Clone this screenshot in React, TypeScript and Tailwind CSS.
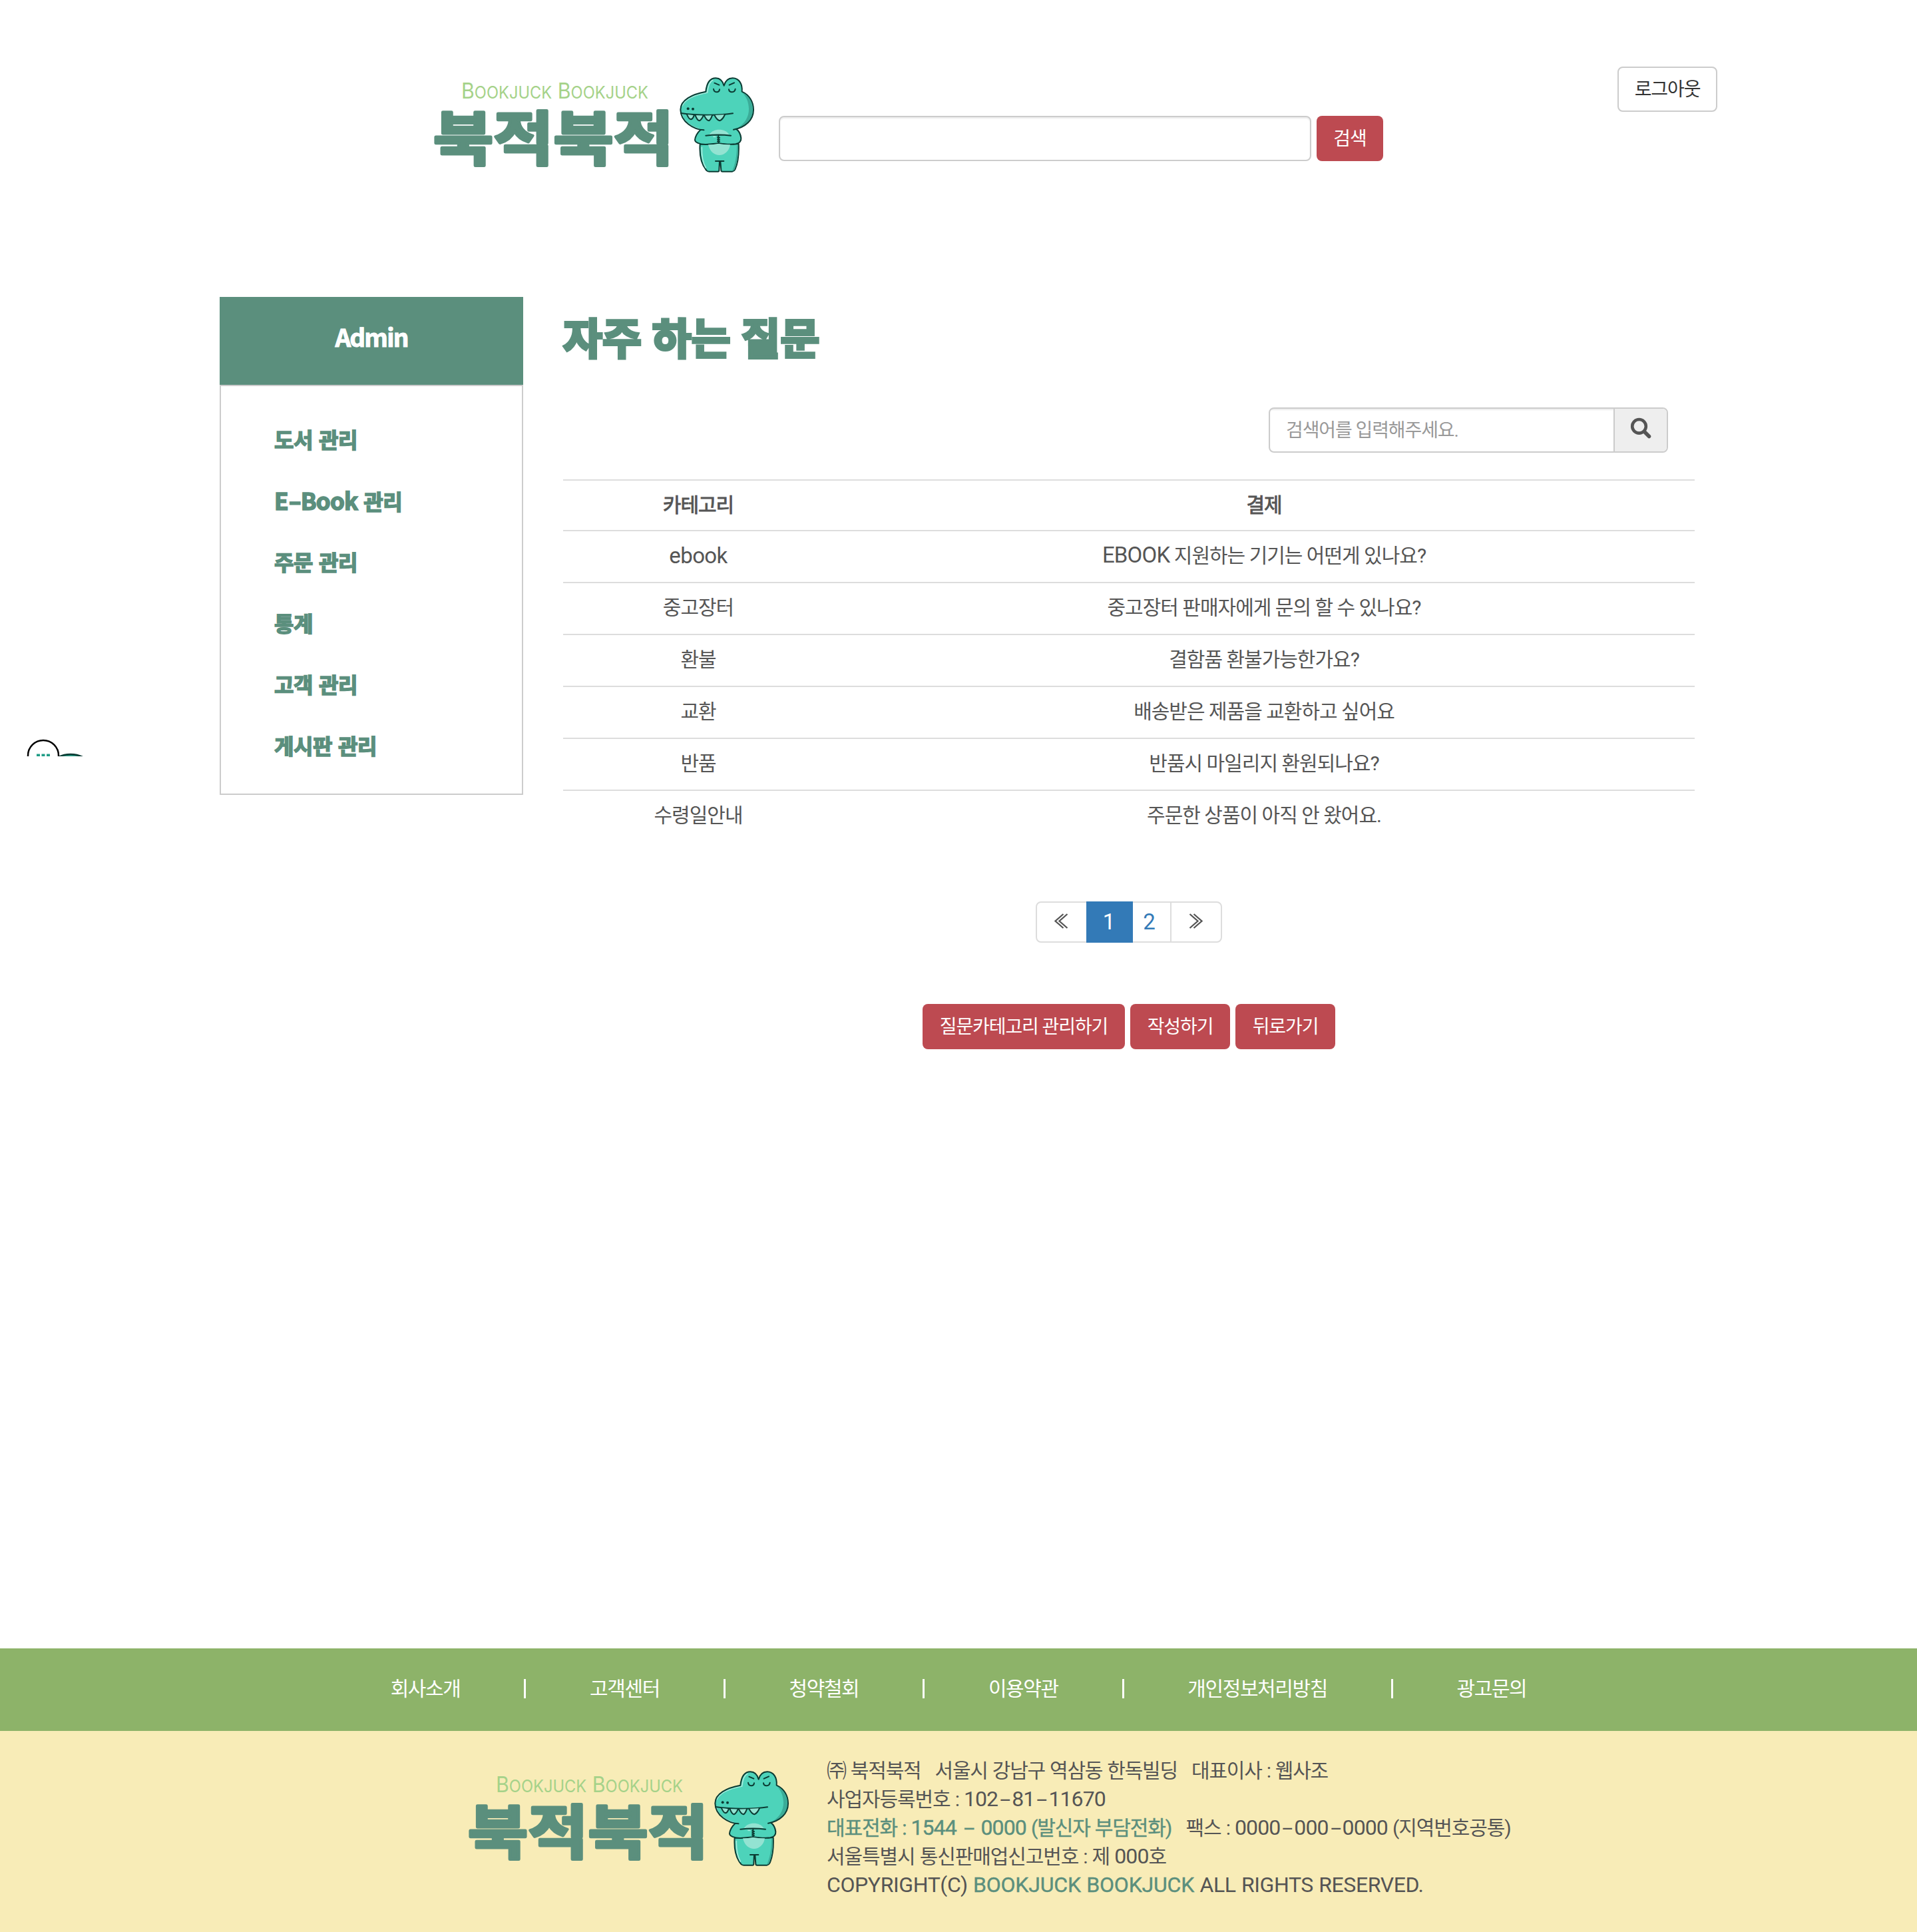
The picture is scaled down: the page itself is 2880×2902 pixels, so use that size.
import React from "react";

const BODY = "font-['Roboto','Noto_Sans_CJK_KR',sans-serif]";

function Crocodile() {
  return (
    <svg x={360} y={0} width={150} height={170} viewBox="0 0 450 510">
      <g stroke="#0b3b33" strokeWidth={6} strokeLinecap="round" strokeLinejoin="round">
        <path d="M155 350 C152 395 160 440 184 468 Q188 473 196 473 L236 473 Q241 473 241 467 L243 428 L247 428 L250 467 Q250 473 256 473 L300 473 Q309 472 313 464 C328 430 331 390 329 348 Z" fill="#4dd3ba" />
        <path d="M158 284 C142 298 133 318 132 330 C132 342 152 350 180 351 C205 350 225 347 238 346 C260 350 300 352 316 349 C336 344 341 335 340 322 C338 305 330 290 318 281 Z" fill="#4dd3ba" />
      </g>
      <path d="M321 352 C322 400 313 445 300 470 Q308 470 311 462 C325 430 328 390 326 352Z" fill="#3bac98" />
      <path d="M192 352 C200 385 220 399 242 399 C266 399 286 382 291 352 Q262 352 238 347 Q215 352 192 352Z" fill="#93e3d2" />
      <path d="M198 306 C208 291 222 284 241 284 C261 284 275 291 286 306Z" fill="#93e3d2" />
      <path d="M163 362 C162 400 168 435 182 458" stroke="#a5ebdd" strokeWidth={5} fill="none" />
      <path d="M172 286 C128 284 68 250 67 194 C67 150 120 124 181 113 C184 85 195 52 226 52 C248 52 258 68 263 86 C268 68 280 52 302 52 C332 52 347 80 344 113 C378 128 396 160 396 195 C396 240 360 275 306 284 L290 292 L190 292Z" fill="#4dd3ba" />
      <path d="M346 118 C376 134 392 162 392 196 C392 238 360 268 322 278 C356 258 376 228 375 190 C374 160 364 136 346 118Z" fill="#3bac98" />
      <path d="M198 306 C208 291 222 284 241 284 C261 284 275 291 286 306Z" fill="#93e3d2" />
      <path d="M74 178 C86 148 130 128 188 117 C190 96 196 68 214 60 M72 212 C78 244 112 270 150 281" stroke="#a5ebdd" strokeWidth={5} fill="none" />
      <g stroke="#0b3b33" strokeWidth={6} strokeLinecap="round" strokeLinejoin="round" fill="none">
        <path d="M172 286 C128 284 68 250 67 194 C67 150 120 124 181 113 C184 85 195 52 226 52 C248 52 258 68 263 86 C268 68 280 52 302 52 C332 52 347 80 344 113 C378 128 396 160 396 195 C396 240 360 275 306 284" />
        <path d="M69 210 C140 220 240 222 303 211" />
        <path d="M96 216 Q104 236 114 238 Q123 236 128 220 M134 220 Q142 242 152 244 Q162 240 170 221 M174 221 Q184 243 195 244 Q203 240 210 220 M220 219 Q232 242 244 244 Q258 238 267 216" fill="#93e3d2" />
        <path d="M216 101 C218 119 241 119 243 103 M285 103 C287 119 312 119 314 101 M220 74 L241 83 M287 83 L309 73" />
        <path d="M181 311 Q238 304 294 311 M238 310 L238 345 M234 319 L243 321 M234 328 L243 330 M234 337 L243 338 M225 426 L262 426" />
      </g>
      <path d="M214 316 L226 316" stroke="#a5ebdd" strokeWidth={5} />
      <circle cx={101} cy={190} r={6} fill="#0b3b33" />
      <circle cx={123} cy={191} r={6} fill="#0b3b33" />
    </svg>
  );
}

function Logo() {
  return (
    <svg width={520} height={180} viewBox="0 0 520 180" className="block shrink-0" role="img">
      <text
        x={53}
        y={48}
        fontSize={32}
        fill="#a5d289"
        fontFamily="Inter, sans-serif"
        textLength={281}
        lengthAdjust="spacingAndGlyphs"
      >
        B<tspan fontSize={25}>OOKJUCK</tspan> B<tspan fontSize={25}>OOKJUCK</tspan>
      </text>
      <text
        x={11}
        y={140}
        fontSize={88}
        fontWeight={700}
        fontFamily="'Noto Sans CJK KR', sans-serif"
        textLength={361}
        lengthAdjust="spacingAndGlyphs"
        fill="#5b8f7d"
        stroke="#5b8f7d"
        strokeWidth={4.5}
        strokeLinejoin="round"
      >
        북적북적
      </text>
      <Crocodile />
    </svg>
  );
}

function RedButton({ children, width }: { children: React.ReactNode; width: string }) {
  return (
    <button className={`h-[68px] ${width} rounded-lg bg-[#bd4a51] pt-[1px] text-[28px] tracking-[-1.1px] whitespace-nowrap text-white`}>
      {children}
    </button>
  );
}

function Header() {
  return (
    <header className="flex h-[446px] items-start pl-[640px]">
      <div className="mt-[100px]">
        <Logo />
      </div>
      <div className="mt-[174px] ml-[10px] flex gap-2">
        <input className="h-[68px] w-[800px] rounded-lg border-2 border-[#ccc] shadow-[inset_0_2px_2px_rgba(0,0,0,0.075)]" />
        <RedButton width="w-[100px]">검색</RedButton>
      </div>
      <button className="mt-[100px] ml-[352px] h-[68px] w-[150px] rounded-lg border-2 border-[#ccc] pt-[1px] text-[28px] tracking-[-1.1px] whitespace-nowrap text-[#333]">
        로그아웃
      </button>
    </header>
  );
}

const menu = ["도서 관리", "E-Book 관리", "주문 관리", "통계", "고객 관리", "게시판 관리"];

function Sidebar() {
  return (
    <aside className="h-[748px] w-[456px] font-['Noto_Sans_CJK_KR',sans-serif] font-bold">
      <div className="flex h-[132px] items-center justify-center bg-[#5b8f7d] pb-[13px] text-[37px] tracking-[-1.8px] text-white [-webkit-text-stroke:1px_#fff]">
        Admin
      </div>
      <ul className="h-[616px] border-2 border-[#ccc] pt-[33px] pl-[80px] text-[32px] tracking-[-0.4px] text-[#5b8f7d] [-webkit-text-stroke:1.6px_#5b8f7d] [word-spacing:2px]">
        {menu.map((m) => (
          <li key={m} className="h-[92px] leading-[92px]">
            {m.startsWith("E-") ? (
              <>
                <span className="text-[35px] tracking-[-0.8px]">E<span className="inline-block w-[19px] scale-x-150 text-center">-</span>Book</span> 관리
              </>
            ) : (
              m
            )}
          </li>
        ))}
      </ul>
    </aside>
  );
}

const rows = [
  ["ebook", "EBOOK", " 지원하는 기기는 어떤게 있나요?"],
  ["중고장터", "", "중고장터 판매자에게 문의 할 수 있나요?"],
  ["환불", "", "결함품 환불가능한가요?"],
  ["교환", "", "배송받은 제품을 교환하고 싶어요"],
  ["반품", "", "반품시 마일리지 환원되나요?"],
  ["수령일안내", "", "주문한 상품이 아직 안 왔어요."],
];

function Faq() {
  return (
    <main className="ml-[60px] w-[1700px]">
      <h1 className="h-[166px] pt-[10px] font-['Noto_Sans_CJK_KR',sans-serif] text-[64px] leading-[96px] font-bold text-[#5b8f7d] [-webkit-text-stroke:4px_#5b8f7d] [word-spacing:1.5px]">
        자주 하는 질문
      </h1>
      <div className="mr-[40px] ml-auto flex h-[68px] w-[600px] overflow-hidden rounded-lg border-2 border-[#ccc]">
        <div className="flex-1 pl-[24px] text-[28px] leading-[66px] tracking-[-1.1px] text-[#999] shadow-[inset_0_2px_2px_rgba(0,0,0,0.075)]">
          검색어를 입력해주세요.
        </div>
        <div className="w-[80px] border-l-2 border-[#ccc] bg-[#eee] pt-[13px] pl-[23px]">
          <svg width={34} height={34} viewBox="0 0 34 34" fill="none" stroke="#555" strokeWidth={4.6} strokeLinecap="round">
            <circle cx={13.5} cy={13.3} r={10.3} />
            <path d="M21.5 21.5 L28.5 28.5" strokeWidth={5.6} />
          </svg>
        </div>
      </div>
      <div className="mt-[40px] text-center text-[30px] tracking-[-1px] text-[#555]">
        <div className="flex h-[76px] border-t-2 border-[#ddd] leading-[74px] [-webkit-text-stroke:0.9px_#555]">
          <div className="w-[406px]">카테고리</div>
          <div className="flex-1">결제</div>
        </div>
        {rows.map(([category, lead, question]) => (
          <div key={category} className="flex h-[78px] border-t-2 border-[#ddd] leading-[73px]">
            <div className={category === "ebook" ? "w-[406px] text-[33px] tracking-[-0.6px]" : "w-[406px]"}>{category}</div>
            <div className="flex-1">
              <span className="text-[33px] leading-[60px] tracking-[-0.8px]">{lead}</span>
              {question}
            </div>
          </div>
        ))}
      </div>
      <div className="mt-[90px] flex justify-center">
        <div className="flex h-[62px] w-[280px] rounded-lg border-2 border-[#ddd] text-center text-[33px] leading-[58px] text-[#337ab7]">
          <div className="flex w-[74px] items-center justify-center pr-[2px] pb-[3px]">
            <Chevrons />
          </div>
          <div className="-my-[2px] w-[70px] bg-[#337ab7] pr-[2px] leading-[62px] text-white">1</div>
          <div className="w-[56px] pr-[7px]">2</div>
          <div className="flex flex-1 items-center justify-center border-l-2 border-[#ddd] pb-[3px]">
            <Chevrons flip />
          </div>
        </div>
      </div>
      <div className="mt-[92px] flex justify-center gap-2">
        <RedButton width="w-[304px]">질문카테고리 관리하기</RedButton>
        <RedButton width="w-[150px]">작성하기</RedButton>
        <RedButton width="w-[150px]">뒤로가기</RedButton>
      </div>
    </main>
  );
}

function Chevrons({ flip = false }: { flip?: boolean }) {
  return (
    <svg width={22} height={24} viewBox="0 0 22 24" className={flip ? "-scale-x-100" : ""} fill="none" stroke="#555" strokeWidth={2.3}>
      <path d="M14.500 1 L2.500 11.500 L14.500 22 M20.500 1 L8.500 11.500 L20.500 22" />
    </svg>
  );
}

const links = ["회사소개", "고객센터", "청약철회", "이용약관", "개인정보처리방침", "광고문의"];

/** Digits with wide dashes between the groups. */
function Num({ value }: { value: string }) {
  return (
    <span className="text-[32px] leading-[30px] tracking-[-0.9px]">
      {value.split("-").map((group, i) => (
        <React.Fragment key={i}>
          {i > 0 && <span className="inline-block w-[21px] scale-x-[1.8] text-center">-</span>}
          {group}
        </React.Fragment>
      ))}
    </span>
  );
}

function Footer() {
  return (
    <footer>
      <nav className="flex h-[124px] items-center justify-center pb-[3px] text-[30px] tracking-[-1.4px] text-white">
        {links.map((l, i) => (
          <React.Fragment key={l}>
            {i > 0 && <span className="mr-[95.6px] ml-[96px] h-[29px] w-[3px] bg-white" />}
            <span>{l}</span>
          </React.Fragment>
        ))}
      </nav>
      <div className="flex h-[302px] items-start bg-[#f8ecb7] pl-[692px]">
        <div className="mt-[44px]">
          <Logo />
        </div>
        <div className="mt-[39px] ml-[30px] text-[30px] leading-[42.85px] tracking-[-1.1px] whitespace-pre text-[#555] [word-spacing:0.8px]">
          <p className="tracking-[-1.2px]">㈜ 북적북적   서울시 강남구 역삼동 한독빌딩   대표이사 : 웹사조</p>
          <p>사업자등록번호 : <Num value="102-81-11670" /></p>
          <p>
            <span className="text-[#5b8f7d] [-webkit-text-stroke:0.4px_#5b8f7d]">대표전화 : <Num value="1544 - 0000" /> (발신자 부담전화)</span>   팩스 : <Num value="0000-000-0000" /> (지역번호공통)
          </p>
          <p>서울특별시 통신판매업신고번호 : 제 <Num value="000" />호</p>
          <p className="text-[32px] tracking-[-0.4px]">
            COPYRIGHT(C) <span className="tracking-[-0.2px] text-[#5b8f7d] [-webkit-text-stroke:0.4px_#5b8f7d]">BOOKJUCK BOOKJUCK</span> ALL RIGHTS RESERVED.
          </p>
        </div>
      </div>
    </footer>
  );
}

function ChatMascot() {
  return (
    <svg className="absolute top-[1106px] left-[36px]" width={100} height={30} viewBox="0 0 100 30">
      <circle cx={70} cy={69} r={42} fill="#2a9d86" stroke="#0b3b33" strokeWidth={2.5} />
      <circle cx={29} cy={29} r={23} fill="#fff" stroke="#000" strokeWidth={2.5} />
      <path d="M19 28.500h5M26.500 28.500h5M34 28.500h5" stroke="#1f9c86" strokeWidth={4} />
    </svg>
  );
}

export default function App() {
  return (
    <div className={`relative flex h-[2902px] w-full flex-col bg-white ${BODY}`}>
      <Header />
      <div className="flex grow pl-[330px]">
        <Sidebar />
        <Faq />
      </div>
      <div className="bg-[#8db369]">
        <Footer />
      </div>
      <ChatMascot />
    </div>
  );
}
